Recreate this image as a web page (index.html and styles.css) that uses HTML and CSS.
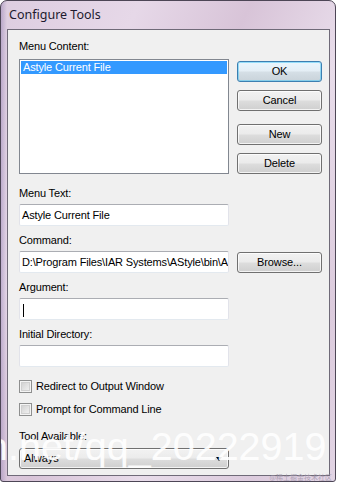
FILE: index.html
```html
<!DOCTYPE html>
<html>
<head>
<meta charset="utf-8">
<link rel="stylesheet" href="styles.css">
</head>
<body>
<div class="window">
  <div class="titlebar">Configure Tools</div>
  <div class="client">
    <div class="top">
      <div class="col-left">
        <div class="lbl">Menu Content:</div>
        <div class="listbox"><div class="item sel">Astyle Current File</div></div>
      </div>
      <div class="col-right">
        <div class="btn default b-ok">OK</div>
        <div class="btn b-cancel">Cancel</div>
        <div class="btn b-new">New</div>
        <div class="btn b-delete">Delete</div>
      </div>
    </div>
    <div class="field first">
      <div class="lbl">Menu Text:</div>
      <div class="input">Astyle Current File</div>
    </div>
    <div class="field">
      <div class="lbl">Command:</div>
      <div class="row">
        <div class="input clip">D:\Program Files\IAR Systems\AStyle\bin\AStyle.exe</div>
        <div class="btn">Browse...</div>
      </div>
    </div>
    <div class="field">
      <div class="lbl">Argument:</div>
      <div class="input"><span class="caret"></span></div>
    </div>
    <div class="field">
      <div class="lbl">Initial Directory:</div>
      <div class="input"></div>
    </div>
    <div class="check first-check"><span class="box"></span><span>Redirect to Output Window</span></div>
    <div class="check"><span class="box"></span><span>Prompt for Command Line</span></div>
    <div class="field tool">
      <div class="lbl">Tool Available:</div>
      <div class="combo"><span>Always</span><span class="arrow"></span></div>
    </div>
  </div>
  <div class="watermark">n.net/qq_20222919</div>
  <div class="wm-small">@稀土掘金技术社区</div>
</div>
</body>
</html>
```
FILE: styles.css
```css
html, body {
  margin: 0;
  padding: 0;
  background: #ffffff;
}
.window {
  position: relative;
  box-sizing: border-box;
  width: 336px;
  height: 482px;
  border: 1px solid #4d4656;
  border-radius: 7px 7px 3px 3px;
  padding: 0 5px 5px 6px;
  display: flex;
  flex-direction: column;
  overflow: hidden;
  background:
    linear-gradient(90deg, rgba(120,100,160,0.35) 0, rgba(120,100,160,0) 6px),
    linear-gradient(115deg, #ddcde0 0%, #e6d8e8 25%, #d8c4d8 45%, #e8dcea 65%, #dccbdd 85%, #e2d4e4 100%);
}
.titlebar {
  height: 28px;
  flex: none;
  box-sizing: border-box;
  padding: 5px 0 0 2px;
  font-family: "Noto Sans", "Open Sans", sans-serif;
  font-size: 12.5px;
  line-height: 17px;
  color: #1d1a2e;
}
.client {
  flex: 1;
  box-sizing: border-box;
  border: 1px solid #6f6a78;
  background: #f0f0f0;
  padding: 10px 7px 0 11px;
  font-family: "Liberation Sans", Arial, sans-serif;
  font-size: 11px;
  color: #000;
}
.lbl {
  height: 13px;
  line-height: 13px;
  letter-spacing: -0.15px;
}
.top {
  display: flex;
  gap: 8px;
}
.col-left {
  width: 210px;
  display: flex;
  flex-direction: column;
}
.col-left .lbl {
  margin-bottom: 6px;
}
.listbox {
  box-sizing: border-box;
  height: 115px;
  border: 1px solid #828790;
  background: #fff;
  padding: 1px;
}
.item {
  height: 13px;
  line-height: 13px;
  padding-left: 2px;
  letter-spacing: -0.15px;
}
.item.sel {
  background: #3399ff;
  color: #fff;
}
.col-right {
  width: 85px;
  display: flex;
  flex-direction: column;
  padding-top: 21px;
}
.btn {
  box-sizing: border-box;
  height: 21px;
  border: 1px solid #707070;
  border-radius: 3px;
  background: linear-gradient(#f2f2f2 0%, #ebebeb 48%, #dddddd 52%, #cfcfcf 100%);
  box-shadow: inset 0 0 0 1px rgba(255,255,255,0.75);
  text-align: center;
  line-height: 19px;
  letter-spacing: -0.1px;
  flex: none;
}
.btn.default {
  border-color: #3c7fb1;
  box-shadow: inset 0 0 0 1px rgba(80, 200, 245, 0.55);
  background: linear-gradient(#eaf6fd 0%, #e4eef5 48%, #d5dfe6 52%, #c9d3da 100%);
}
.b-cancel { margin-top: 8px; }
.b-new { margin-top: 13px; }
.b-delete { margin-top: 8px; }
.field {
  margin-top: 8px;
}
.field.first {
  margin-top: 13px;
}
.field .lbl {
  margin-bottom: 4px;
}
.input {
  box-sizing: border-box;
  width: 210px;
  height: 22px;
  background: #fff;
  border: 1px solid #e2e3ea;
  border-top-color: #abadb3;
  border-bottom-color: #e3e9ef;
  border-radius: 2px;
  padding: 0 2px;
  line-height: 20px;
  white-space: nowrap;
  overflow: hidden;
  letter-spacing: -0.15px;
  position: relative;
}
.row {
  display: flex;
  align-items: center;
  gap: 8px;
}
.row .btn {
  width: 85px;
}
.caret {
  display: inline-block;
  width: 1px;
  height: 13px;
  background: #000;
  vertical-align: middle;
  margin-left: 1px;
}
.check {
  display: flex;
  align-items: center;
  gap: 4px;
  height: 13px;
  line-height: 13px;
  margin-top: 10px;
  letter-spacing: -0.15px;
}
.check.first-check {
  margin-top: 13px;
}
.box {
  box-sizing: border-box;
  width: 13px;
  height: 13px;
  border: 1px solid #8e8f8f;
  background: linear-gradient(135deg, #cbcbcb 0%, #e6e6e6 60%, #f6f6f6 100%);
  box-shadow: inset 0 0 0 1px #f4f4f4, inset 0 0 0 2px #d0d0d0;
}
.field.tool {
  margin-top: 14px;
}
.field.tool .lbl {
  margin-bottom: 5px;
}
.combo {
  box-sizing: border-box;
  width: 210px;
  height: 21px;
  border: 1px solid #707070;
  border-radius: 3px;
  background: linear-gradient(#f2f2f2 0%, #ebebeb 48%, #dddddd 52%, #cfcfcf 100%);
  box-shadow: inset 0 0 0 1px rgba(255,255,255,0.75);
  display: flex;
  align-items: center;
  justify-content: space-between;
  padding: 0 6px 0 4px;
  line-height: 19px;
}
.arrow {
  width: 0;
  height: 0;
  border-left: 3.5px solid transparent;
  border-right: 3.5px solid transparent;
  border-top: 4px solid #000;
}
.watermark {
  position: absolute;
  left: -15px;
  top: 423px;
  font-family: "Liberation Sans", Arial, sans-serif;
  font-size: 39.5px;
  line-height: 44px;
  color: rgba(255,255,255,0.92);
  white-space: nowrap;
  pointer-events: none;
}
.wm-small {
  position: absolute;
  right: 3px;
  bottom: 0;
  font-family: "Noto Sans CJK SC", sans-serif;
  font-size: 7px;
  line-height: 8px;
  color: rgba(160,150,170,0.8);
  white-space: nowrap;
}
```
